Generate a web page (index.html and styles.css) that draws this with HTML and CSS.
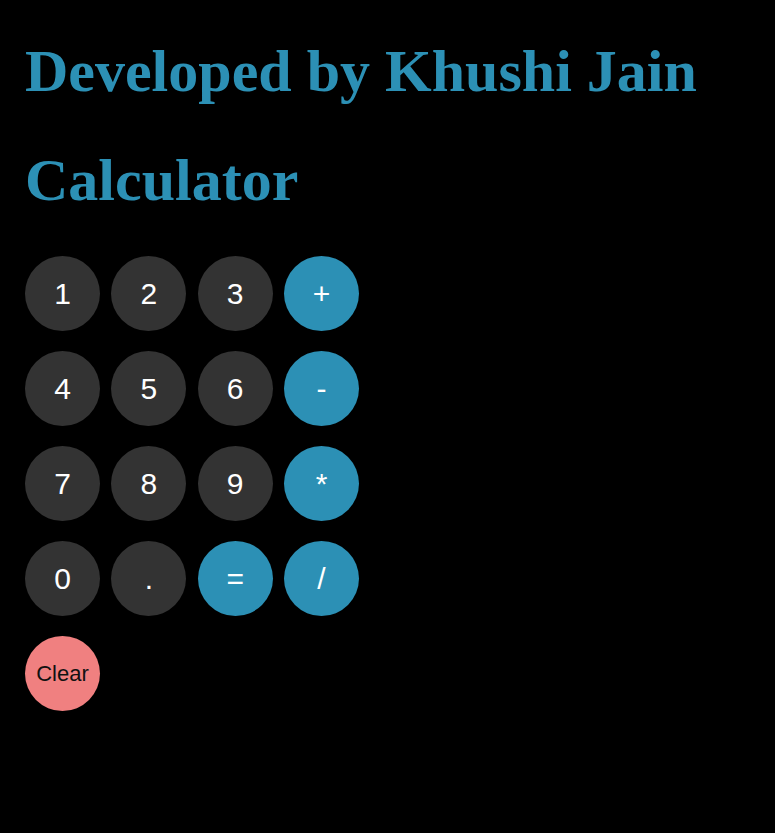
FILE: index.html
```html
<!DOCTYPE html>
<html>
<head>
<meta charset="utf-8">
<title>Calculator</title>
<link rel="stylesheet" href="styles.css">
</head>
<body>
<div class="page">
  <h1 class="title">Developed by Khushi Jain</h1>
  <h1 class="title">Calculator</h1>
  <div class="pad">
    <button class="key num">1</button>
    <button class="key num">2</button>
    <button class="key num">3</button>
    <button class="key op">+</button>
    <button class="key num">4</button>
    <button class="key num">5</button>
    <button class="key num">6</button>
    <button class="key op">-</button>
    <button class="key num">7</button>
    <button class="key num">8</button>
    <button class="key num">9</button>
    <button class="key op">*</button>
    <button class="key num">0</button>
    <button class="key num">.</button>
    <button class="key op">=</button>
    <button class="key op">/</button>
    <button class="key clear">Clear</button>
  </div>
</div>
</body>
</html>
```
FILE: styles.css
```css
html, body {
  margin: 0;
  padding: 0;
  background: #000;
}
.page {
  padding: 0 25px;
}
.title {
  font-family: "Liberation Serif", "Times New Roman", serif;
  font-weight: bold;
  font-size: 60px;
  line-height: 69px;
  color: #2c90b5;
  margin: 0;
}
.title:first-child {
  padding-top: 37px;
  margin-bottom: 40px;
}
.pad {
  margin-top: 41px;
  display: grid;
  grid-template-columns: repeat(4, 75px);
  column-gap: 11.33px;
  row-gap: 20px;
}
.key {
  width: 75px;
  height: 75px;
  border: none;
  border-radius: 50%;
  padding: 0;
  font-family: "Liberation Sans", Arial, sans-serif;
  font-size: 30px;
  color: #fff;
  display: flex;
  align-items: center;
  justify-content: center;
}
.num { background: #333333; }
.op { background: #2c90b5; }
.clear {
  background: #f08080;
  color: #111;
  font-size: 22px;
}
```
